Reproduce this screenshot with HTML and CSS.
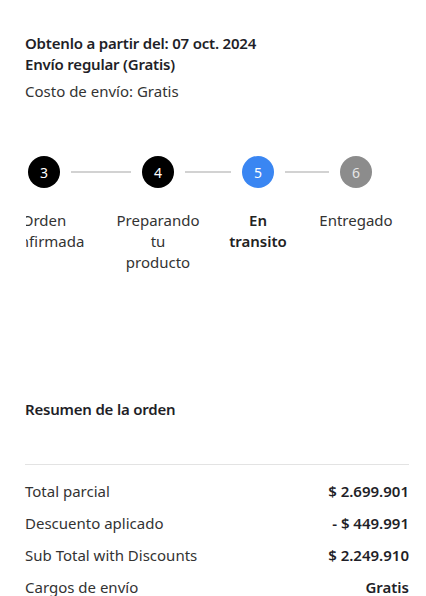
FILE: index.html
```html
<!DOCTYPE html>
<html lang="es">
<head>
<meta charset="utf-8">
<link rel="stylesheet" href="styles.css">
</head>
<body>
<main class="page">
  <section class="delivery">
    <p class="strong">Obtenlo a partir del: 07 oct. 2024</p>
    <p class="strong">Envío regular (Gratis)</p>
    <p class="cost">Costo de envío: Gratis</p>
  </section>

  <section class="stepper-wrap">
    <div class="stepper">
      <div class="step done">
        <span class="dot">3</span>
        <span class="label">Orden<br>confirmada</span>
      </div>
      <span class="line l1"></span>
      <div class="step done">
        <span class="dot">4</span>
        <span class="label">Preparando<br>tu<br>producto</span>
      </div>
      <span class="line l2"></span>
      <div class="step current">
        <span class="dot">5</span>
        <span class="label">En<br>transito</span>
      </div>
      <span class="line l3"></span>
      <div class="step pending">
        <span class="dot">6</span>
        <span class="label">Entregado</span>
      </div>
    </div>
  </section>

  <section class="summary">
    <h2 class="summary-title">Resumen de la orden</h2>
    <hr class="divider">
    <div class="row"><span>Total parcial</span><span class="val">$ 2.699.901</span></div>
    <div class="row"><span>Descuento aplicado</span><span class="val">- $ 449.991</span></div>
    <div class="row"><span>Sub Total with Discounts</span><span class="val">$ 2.249.910</span></div>
    <div class="row"><span>Cargos de envío</span><span class="val">Gratis</span></div>
  </section>
</main>
</body>
</html>
```
FILE: styles.css
```css
* { box-sizing: border-box; }
html, body { margin: 0; padding: 0; background: #fff; }
body {
  font-family: "Noto Sans", "Open Sans", sans-serif;
  color: #222;
  overflow: hidden;
}
.page { padding: 33px 17px 0 25px; }
.delivery p { margin: 0; font-size: 15px; line-height: 21px; }
.delivery .strong { font-weight: 600; color: #1f1f28; letter-spacing: -0.2px; }
.delivery .cost { margin-top: 6px; color: #333; }

.stepper-wrap {
  margin: 54px 0 0 1px;
  overflow: hidden;
  height: 122px;
}
.stepper {
  display: flex;
  align-items: flex-start;
  padding-left: 2px;
}
.step {
  width: 32px;
  flex: none;
  display: flex;
  flex-direction: column;
  align-items: center;
}
.dot {
  width: 32px;
  height: 32px;
  border-radius: 50%;
  display: flex;
  align-items: center;
  justify-content: center;
  font-size: 14px;
  color: #fff;
}
.done .dot { background: #000; }
.current .dot { background: #3a86f2; }
.pending .dot { background: #8c8c8c; color: #e6e6e6; }
.label {
  margin-top: 22px;
  width: max-content;
  text-align: center;
  font-size: 15px;
  line-height: 21px;
  color: #333;
}
.current .label { font-weight: 600; color: #222; }
.line {
  flex: none;
  height: 1.5px;
  margin: 15px 11px 0;
  background: #d2d2d2;
}
.l1 { width: 60px; }
.l2 { width: 46px; }
.l3 { width: 44px; }

.summary { margin-top: 121px; }
.summary-title {
  margin: 0;
  font-size: 15px;
  line-height: 21px;
  font-weight: 600;
  color: #1f1f28;
  letter-spacing: -0.2px;
}
.divider {
  border: 0;
  height: 1px;
  background: #e3e3e3;
  margin: 44px 0 0;
}
.row {
  display: flex;
  justify-content: space-between;
  font-size: 15px;
  line-height: 21px;
  color: #333;
}
.divider + .row { margin-top: 16px; }
.row + .row { margin-top: 11px; }
.row .val { font-weight: 600; color: #1f1f28; }
```
